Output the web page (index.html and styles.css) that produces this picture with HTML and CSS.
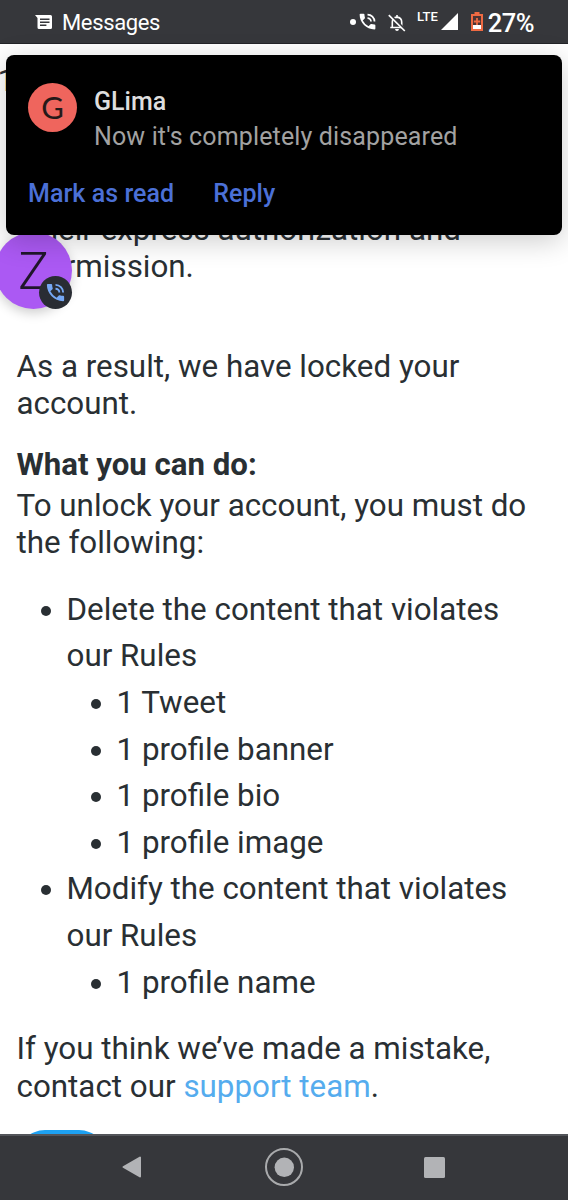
FILE: index.html
```html
<!DOCTYPE html>
<html lang="en">
<head>
<meta charset="utf-8">
<title>Account locked</title>
<link rel="stylesheet" href="styles.css">
</head>
<body>
<div class="phone">
  <header class="status">
    <svg class="msg-icon" viewBox="0 0 18 15"><path fill="#fff" d="M0 0h15.500a1.500 1.500 0 0 1 1.500 1.500v11A1.500 1.500 0 0 1 15.500 14H4a1.500 1.500 0 0 1-1.500-1.500V3z"/><path stroke="#36373b" stroke-width="1.500" d="M5 4.200h9.500M5 7.200h9.500M5 10.200h6.400"/></svg>
    <span class="app">Messages</span>
    <div class="indicators">
      <i class="dot"></i>
      <svg class="call" viewBox="0 0 24 24"><use href="#phone"/></svg>
      <svg class="bell" viewBox="0 0 18 18"><path d="M4.300 13.500V8q0-4.500 4.700-4.900Q13.700 3.500 13.700 8v5.500M2.300 13.500h13.400M9 1v2" fill="none" stroke="#fff" stroke-width="1.600"/><path d="M7 15h4q-.3 2-2 2t-2-2z" fill="#fff"/><path d="M2 .500 17.500 16" stroke="#36373b" stroke-width="2"/><path d="M.800 1.200 16.800 17" stroke="#fff" stroke-width="1.700"/></svg>
      <span class="lte">LTE</span>
      <svg class="signal" viewBox="0 0 17 17"><path d="M17 0v17H0z" fill="#fff"/></svg>
      <svg class="battery" viewBox="0 0 12 19"><path d="M3.500 0h5v2H12v17H0V2h3.500z" fill="#ee6a43"/><path d="M2 4h8v9H2z" fill="#4a3434"/><path d="M2 13h8v4H2z" fill="#fff"/><path d="M6 6v7M2.800 9.500h6.400" stroke="#ee6a43" stroke-width="1.800"/></svg>
      <span class="percent">27%</span>
    </div>
  </header>
  <main class="page">
    <p class="lead">1</p>
    <p class="terms">their express authorization and<br>permission.</p>
    <p class="result">As a result, we have locked your account.</p>
    <h2>What you can do:</h2>
    <p class="unlock">To unlock your account, you must do the following:</p>
    <ul>
      <li>Delete the content that violates our Rules
        <ul><li>1 Tweet</li><li>1 profile banner</li><li>1 profile bio</li><li>1 profile image</li></ul>
      </li>
      <li>Modify the content that violates our Rules
        <ul><li>1 profile name</li></ul>
      </li>
    </ul>
    <p class="mistake">If you think we’ve made a mistake, contact our <a>support team</a>.</p>
    <div class="button"></div>
  </main>
  <nav class="nav">
    <svg viewBox="0 0 40 40"><path d="M9.500 20 26 10.500v19z" fill="#b2b3b6" stroke="#b2b3b6" stroke-width="2" stroke-linejoin="round"/></svg>
    <svg viewBox="0 0 40 40"><circle cx="20" cy="20" r="18" fill="none" stroke="#a9aaac" stroke-width="2"/><circle cx="20.300" cy="20.300" r="9.700" fill="#b2b3b6"/></svg>
    <svg viewBox="0 0 40 40"><rect x="10" y="10" width="21" height="21" rx="1.500" fill="#b2b3b6"/></svg>
  </nav>
  <div class="bubble"><span>Z</span>
    <div class="badge"><svg viewBox="0 0 24 24"><use href="#phone"/></svg></div>
  </div>
  <section class="notice">
    <div class="avatar">G</div>
    <div class="message"><strong>GLima</strong><span>Now it's completely disappeared</span></div>
    <div class="actions"><span>Mark as read</span><span>Reply</span></div>
  </section>
</div>
<svg class="symbols"><symbol id="phone" viewBox="0 0 24 24"><path fill="currentColor" d="M20 15.500c-1.250 0-2.450-.2-3.570-.57a1 1 0 0 0-1.020.24l-2.200 2.200a15.050 15.050 0 0 1-6.590-6.590l2.200-2.210a.96.96 0 0 0 .25-1A11.360 11.360 0 0 1 8.500 4a1 1 0 0 0-1-1H4a1 1 0 0 0-1 1c0 9.390 7.610 17 17 17a1 1 0 0 0 1-1v-3.500a1 1 0 0 0-1-1z"/><path fill="none" stroke="currentColor" stroke-width="2" d="M12 8a4 4 0 0 1 4 4"/><path class="wave-out" fill="none" stroke="currentColor" stroke-width="2" d="M12 4a8 8 0 0 1 8 8"/></symbol></svg>
</body>
</html>
```
FILE: styles.css
```css
* { box-sizing: border-box; }
body { margin: 0; background: #fff; font-family: Roboto, sans-serif; }
.phone { position: relative; width: 568px; height: 1200px; overflow: hidden; display: flex; flex-direction: column; }
.symbols { position: absolute; width: 0; height: 0; }
.status { height: 44px; flex: none; display: flex; align-items: center; padding: 0 34px 0 35px; background: #36373b; border-bottom: 1px solid #232428; color: #fff; }
.msg-icon { width: 18px; height: 15px; margin-top: 1px; }
.app { margin-left: 9px; font-size: 22px; letter-spacing: -.35px; padding-top: 2px; }
.indicators { margin-left: auto; display: flex; align-items: center; }
.dot { width: 6px; height: 6px; border-radius: 50%; background: #fff; margin-right: 1px; }
.call { width: 21px; height: 21px; }
.bell { width: 18px; height: 18px; margin-left: 10px; margin-top: 2px; }
.lte { font-size: 13px; font-weight: 500; line-height: 14px; margin: -9px 3px 0 11px; }
.signal { width: 17px; height: 17px; }
.battery { width: 12px; height: 19px; margin-left: 13px; }
.percent { font-size: 25.500px; font-weight: 500; letter-spacing: -.5px; margin-left: 5px; padding-top: 3px; }
.page { flex: 1; min-height: 0; overflow: hidden; padding: 18px 17px 0 16.500px; font-size: 31.350px; line-height: 37.300px; color: #292f33; }
.page p, .page h2 { margin: 0; font-size: inherit; }
.page .lead { height: 148.500px; margin-left: -19px; }
.page .terms { padding-left: 14px; }
.page .result { margin-top: 62.500px; }
.page h2 { margin-top: 24px; font-weight: 700; font-size: 31.200px; }
.page .unlock { margin-top: 3.500px; }
.page ul { margin: 25.300px 0 0; padding: 0 20px 0 50px; line-height: 46.600px; list-style: disc; }
.page ul ul { margin: 0; list-style: disc; }
.page .mistake { margin-top: 24px; }
.page a { color: #55acee; }
.button { width: 90px; height: 60px; margin: 25px 0 0; border-radius: 28px; background: #1da1f2; }
.nav { height: 66px; flex: none; display: flex; justify-content: center; align-items: center; gap: 110px; padding-bottom: 2px; background: #36373b; border-top: 2px solid #53555a; }
.nav svg { width: 40px; height: 40px; }
.bubble { position: absolute; left: -5px; top: 232px; width: 77px; height: 77px; border-radius: 50%; background: #ab59f3; color: #20162b; box-shadow: 0 4px 12px rgba(0,0,0,.2); }
.bubble span { display: block; padding-left: 23px; font-size: 52px; font-weight: 300; line-height: 80px; }
.badge { position: absolute; right: 0; bottom: 0; width: 33px; height: 33px; border-radius: 50%; background: #292c33; color: #75a8f5; display: flex; align-items: center; justify-content: center; }
.badge svg { width: 23px; height: 23px; }
.notice { position: absolute; left: 5.500px; top: 55px; width: 556.500px; height: 179.500px; padding: 28px 22px 0 22.500px; border-radius: 8px; background: #000; box-shadow: 0 6px 28px rgba(0,0,0,.2); display: grid; grid-template-columns: 49px 1fr; grid-template-rows: 95px 1fr; column-gap: 17px; }
.avatar { width: 49px; height: 49px; border-radius: 50%; background: #ef655d; color: #251919; font-family: Lato, sans-serif; font-size: 31px; line-height: 49px; text-align: center; }
.message { display: flex; flex-direction: column; padding-top: 1px; font-size: 25px; line-height: 35px; letter-spacing: .14px; color: #a2a2a2; }
.message strong { color: #dedede; font-weight: 500; letter-spacing: 0; }
.actions { grid-column: 1 / 3; display: flex; gap: 39px; padding-top: 1px; color: #4b70d7; font-size: 25px; line-height: 30px; font-weight: 500; letter-spacing: .05px; }
```
